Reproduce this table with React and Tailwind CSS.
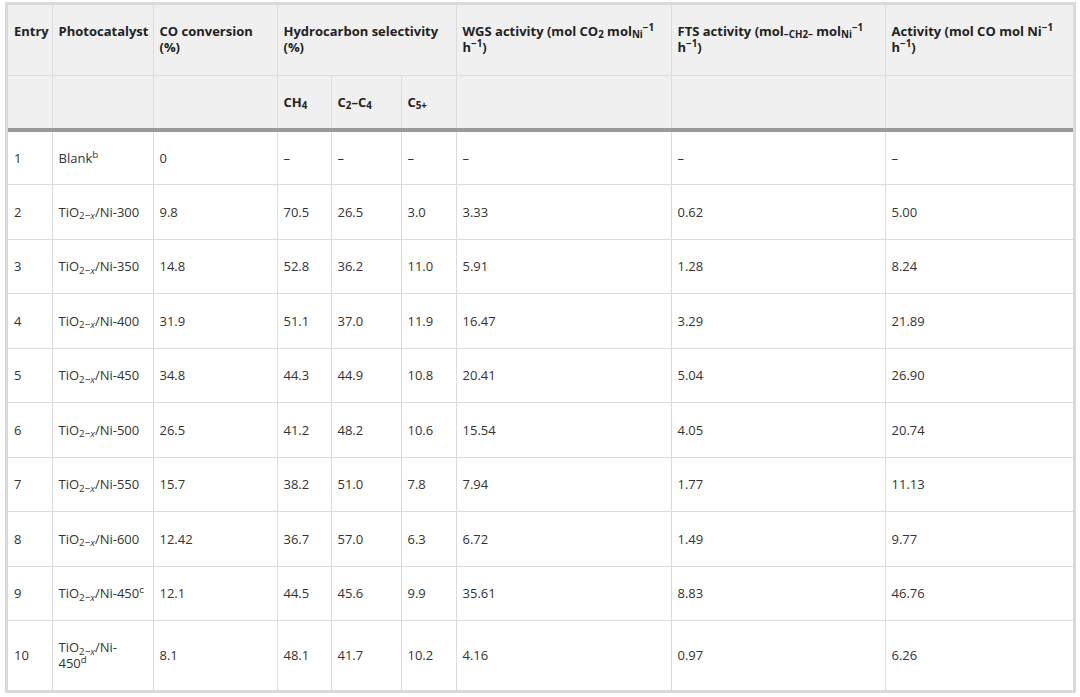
import React from "react";

const rows = [
  { entry: "1", cat: <>Blank<sup>b</sup></>, co: "0", ch4: "–", c24: "–", c5: "–", wgs: "–", fts: "–", act: "–" },
  { entry: "2", t: "300", co: "9.8", ch4: "70.5", c24: "26.5", c5: "3.0", wgs: "3.33", fts: "0.62", act: "5.00" },
  { entry: "3", t: "350", co: "14.8", ch4: "52.8", c24: "36.2", c5: "11.0", wgs: "5.91", fts: "1.28", act: "8.24" },
  { entry: "4", t: "400", co: "31.9", ch4: "51.1", c24: "37.0", c5: "11.9", wgs: "16.47", fts: "3.29", act: "21.89" },
  { entry: "5", t: "450", co: "34.8", ch4: "44.3", c24: "44.9", c5: "10.8", wgs: "20.41", fts: "5.04", act: "26.90" },
  { entry: "6", t: "500", co: "26.5", ch4: "41.2", c24: "48.2", c5: "10.6", wgs: "15.54", fts: "4.05", act: "20.74" },
  { entry: "7", t: "550", co: "15.7", ch4: "38.2", c24: "51.0", c5: "7.8", wgs: "7.94", fts: "1.77", act: "11.13" },
  { entry: "8", t: "600", co: "12.42", ch4: "36.7", c24: "57.0", c5: "6.3", wgs: "6.72", fts: "1.49", act: "9.77" },
  { entry: "9", t: "450", note: "c", co: "12.1", ch4: "44.5", c24: "45.6", c5: "9.9", wgs: "35.61", fts: "8.83", act: "46.76" },
  { entry: "10", t: "450", note: "d", wrap: true, co: "8.1", ch4: "48.1", c24: "41.7", c5: "10.2", wgs: "4.16", fts: "0.97", act: "6.26" },
];

const TiO = () => (
  <>
    TiO<sub>2−<i>x</i></sub>/Ni-
  </>
);

const Catalyst = ({ r }) => {
  if (r.cat) return r.cat;
  if (r.wrap)
    return (
      <>
        <TiO />
        <br />
        {r.t}
        <sup>{r.note}</sup>
      </>
    );
  return (
    <>
      <TiO />
      {r.t}
      {r.note && <sup>{r.note}</sup>}
    </>
  );
};

const hd = "px-[6px] pt-[18px] align-top text-left font-bold text-[#222] border-r border-b border-[#dcdcdc]";
const hd2 = "px-[6px] align-middle text-left font-bold text-[#222] border-r border-[#dcdcdc]";
const td = "px-[6px] align-middle text-[#333] border-r border-b border-[#dcdcdc]";

export default function App() {
  const last = rows.length - 1;
  return (
    <div className="min-h-screen bg-white pt-[2px] pl-[5px]" style={{ fontFamily: '"Open Sans", "Noto Sans", sans-serif' }}>
      <div className="w-[1071px] border-[3px] border-[#dadada]">
        <table className="table-fixed w-[1065px] border-collapse text-[13px] leading-[16px]">
          <colgroup>
            <col className="w-[44px]" />
            <col className="w-[101px]" />
            <col className="w-[124px]" />
            <col className="w-[54px]" />
            <col className="w-[70px]" />
            <col className="w-[55px]" />
            <col className="w-[215px]" />
            <col className="w-[214px]" />
            <col className="w-[188px]" />
          </colgroup>
          <thead className="bg-[#f0f0f0]">
            <tr className="h-[70px]">
              <th className={hd}>Entry</th>
              <th className={hd}>Photocatalyst</th>
              <th className={hd}>CO conversion (%)</th>
              <th colSpan={3} className={hd}>Hydrocarbon selectivity (%)</th>
              <th className={hd}>
                WGS activity (mol CO<sub>2</sub> mol<sub>Ni</sub>
                <sup>−1</sup>
                <br />h<sup>−1</sup>)
              </th>
              <th className={hd}>
                FTS activity (mol<sub>–CH2–</sub> mol<sub>Ni</sub>
                <sup>−1</sup>
                <br />h<sup>−1</sup>)
              </th>
              <th className={hd + " border-r-0"}>
                Activity (mol CO mol Ni<sup>−1</sup>
                <br />h<sup>−1</sup>)
              </th>
            </tr>
            <tr className="h-[55px] border-b-4 border-[#999]">
              <th className={hd2}></th>
              <th className={hd2}></th>
              <th className={hd2}></th>
              <th className={hd2}>
                CH<sub>4</sub>
              </th>
              <th className={hd2}>
                C<sub>2</sub>–C<sub>4</sub>
              </th>
              <th className={hd2}>
                C<sub>5+</sub>
              </th>
              <th className={hd2}></th>
              <th className={hd2}></th>
              <th className={hd2 + " border-r-0"}></th>
            </tr>
          </thead>
          <tbody>
            {rows.map((r, i) => {
              const b = i === last ? " border-b-0" : "";
              return (
                <tr key={r.entry} className={r.wrap ? "h-[69px]" : "h-[54.5px]"}>
                  <td className={td + b}>{r.entry}</td>
                  <td className={td + " whitespace-nowrap pr-0" + b}>
                    <Catalyst r={r} />
                  </td>
                  <td className={td + b}>{r.co}</td>
                  <td className={td + b}>{r.ch4}</td>
                  <td className={td + b}>{r.c24}</td>
                  <td className={td + b}>{r.c5}</td>
                  <td className={td + b}>{r.wgs}</td>
                  <td className={td + b}>{r.fts}</td>
                  <td className={td + " border-r-0" + b}>{r.act}</td>
                </tr>
              );
            })}
          </tbody>
        </table>
      </div>
    </div>
  );
}
